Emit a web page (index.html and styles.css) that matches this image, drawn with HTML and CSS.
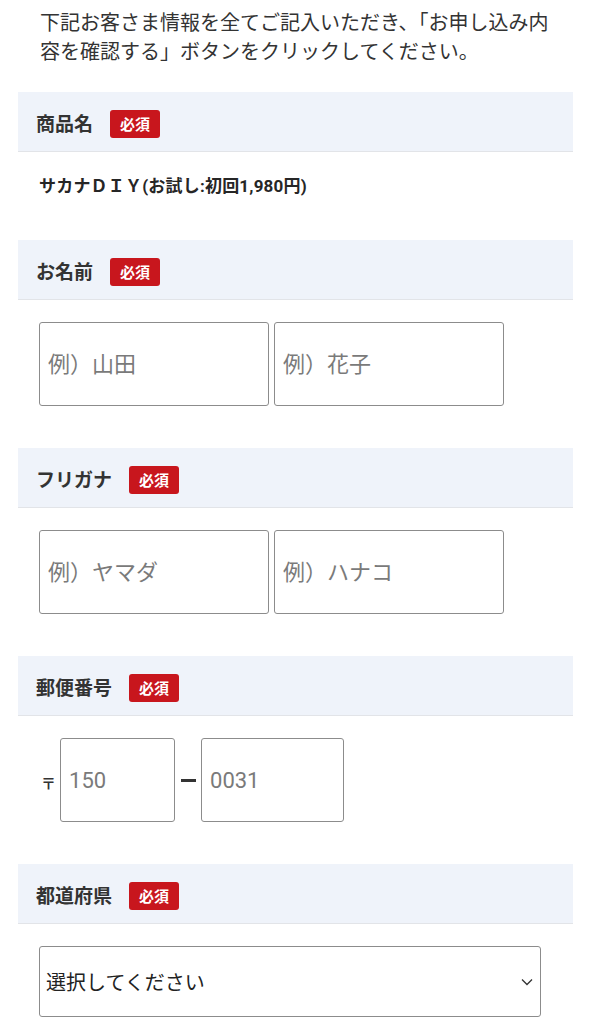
FILE: index.html
```html
<!DOCTYPE html>
<html lang="ja">
<head>
<meta charset="utf-8">
<title>お客さま情報</title>
<link rel="stylesheet" href="styles.css">
</head>
<body>
<div class="page">
  <p class="intro">下記お客さま情報を全てご記入いただき、「お申し込み内容を確認する」ボタンをクリックしてください。</p>

  <section class="field">
    <div class="field-head"><span class="label">商品名</span><span class="badge">必須</span></div>
    <div class="field-body"><p class="product">サカナＤＩＹ(お試し:初回1,980円)</p></div>
  </section>

  <section class="field">
    <div class="field-head"><span class="label">お名前</span><span class="badge">必須</span></div>
    <div class="field-body">
      <div class="pair">
        <input class="box name" type="text" placeholder="例）山田">
        <input class="box name" type="text" placeholder="例）花子">
      </div>
    </div>
  </section>

  <section class="field">
    <div class="field-head"><span class="label">フリガナ</span><span class="badge">必須</span></div>
    <div class="field-body">
      <div class="pair">
        <input class="box name" type="text" placeholder="例）ヤマダ">
        <input class="box name" type="text" placeholder="例）ハナコ">
      </div>
    </div>
  </section>

  <section class="field">
    <div class="field-head"><span class="label">郵便番号</span><span class="badge">必須</span></div>
    <div class="field-body">
      <div class="postal">
        <span class="mark">〒</span>
        <input class="box zip1" type="text" placeholder="150">
        <span class="dash"></span>
        <input class="box zip2" type="text" placeholder="0031">
      </div>
    </div>
  </section>

  <section class="field">
    <div class="field-head"><span class="label">都道府県</span><span class="badge">必須</span></div>
    <div class="field-body">
      <div class="select-wrap">
        <select class="select">
          <option>選択してください</option>
        </select>
        <svg class="chev" width="12" height="8" viewBox="0 0 12 8"><path d="M1 1.5 L6 6.5 L11 1.5" fill="none" stroke="#333" stroke-width="1.3"/></svg>
      </div>
    </div>
  </section>
</div>
</body>
</html>
```

FILE: styles.css
```css
html, body {
  margin: 0;
  padding: 0;
  background: #ffffff;
}
body {
  font-family: Roboto, "Noto Sans CJK JP", "Noto Sans", sans-serif;
  color: #333333;
}
.page {
  margin: 0 17px 0 18px;
  padding-top: 9px;
}
.intro {
  margin: 0 0 25px 0;
  padding: 0 12px 0 22px;
  font-size: 20px;
  line-height: 29px;
  color: #333333;
}
.field-head {
  display: flex;
  align-items: center;
  height: 59px;
  background: #eff3fa;
  border-bottom: 1px solid #e2e4e8;
  padding-left: 18px;
}
.label {
  font-size: 19px;
  font-weight: 700;
  color: #333333;
  margin-right: 17px;
  padding-top: 1px;
}
.badge {
  display: inline-flex;
  align-items: center;
  justify-content: center;
  width: 50px;
  height: 28px;
  background: #c8161d;
  color: #ffffff;
  border-radius: 3px;
  font-size: 15px;
  font-weight: 700;
  margin-top: 4px;
}
.field-body {
  padding: 22px 0 42px 21px;
}
.product {
  margin: 0;
  font-size: 17px;
  line-height: 24px;
  font-weight: 700;
  letter-spacing: 0.2px;
  color: #262626;
}
.pair {
  display: flex;
  gap: 5px;
}
.box {
  box-sizing: border-box;
  height: 84px;
  border: 1px solid #8c8c8c;
  border-radius: 3px;
  background: #ffffff;
  padding: 0 8px;
  font-family: Roboto, "Noto Sans CJK JP", sans-serif;
  font-size: 22px;
  color: #333333;
  outline: none;
  margin: 0;
}
.box::placeholder {
  color: #7a7a7a;
}
.name {
  width: 230px;
}
.postal {
  display: flex;
  align-items: center;
}
.mark {
  font-size: 15px;
  font-weight: 700;
  color: #333333;
  margin-left: 2px;
  margin-right: 4px;
  padding-top: 4px;
}
.zip1 {
  width: 115px;
}
.zip2 {
  width: 143px;
}
.dash {
  display: block;
  width: 15px;
  height: 3px;
  background: #333333;
  margin: 0 5px 0 6px;
}
.select-wrap {
  position: relative;
  width: 502px;
}
.select {
  -webkit-appearance: none;
  appearance: none;
  box-sizing: border-box;
  width: 502px;
  height: 71px;
  border: 1px solid #8c8c8c;
  border-radius: 3px;
  background: #ffffff;
  padding: 0 6px;
  font-family: "Noto Sans CJK JP", sans-serif;
  font-size: 20px;
  color: #222222;
  margin: 0;
}
.chev {
  position: absolute;
  right: 8px;
  top: 32px;
  pointer-events: none;
}
```
